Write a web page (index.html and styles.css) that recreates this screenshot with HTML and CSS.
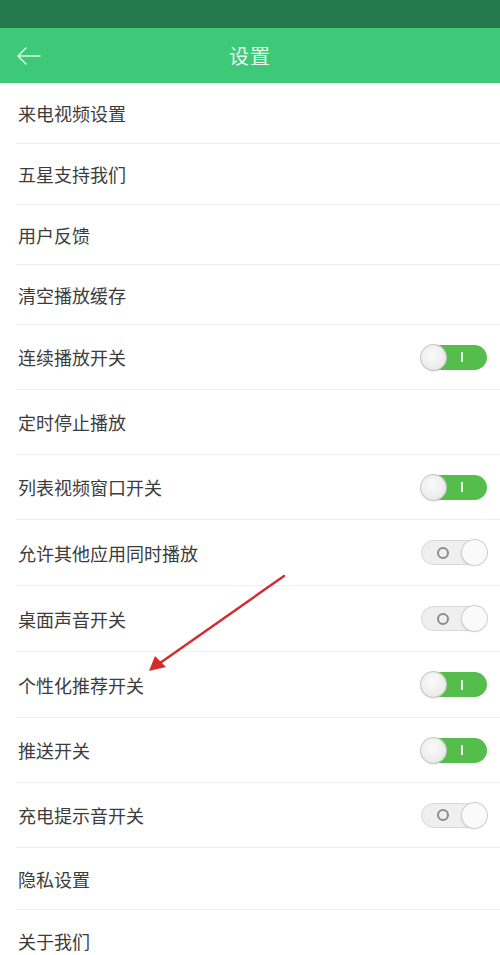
FILE: index.html
```html
<!DOCTYPE html>
<html lang="zh-CN">
<head>
<meta charset="utf-8">
<title>设置</title>
<link rel="stylesheet" href="styles.css">
</head>
<body>
<div class="page">
  <div class="statusbar"></div>
  <header class="topbar">
    <svg class="back" width="26" height="20" viewBox="0 0 26 20"><path d="M24 10H3M10 2L2 10l8 8" fill="none" stroke="#d9f6e4" stroke-width="1.6" stroke-linecap="round" stroke-linejoin="round"/></svg>
    <h1 class="title">设置</h1>
  </header>
  <ul class="list">
    <li class="row short">来电视频设置</li>
    <li class="row short">五星支持我们</li>
    <li class="row short s60">用户反馈</li>
    <li class="row short s60">清空播放缓存</li>
    <li class="row">连续播放开关<span class="toggle on"><span class="knob"></span><span class="mark"></span></span></li>
    <li class="row">定时停止播放</li>
    <li class="row">列表视频窗口开关<span class="toggle on"><span class="knob"></span><span class="mark"></span></span></li>
    <li class="row tall">允许其他应用同时播放<span class="toggle off"><span class="mark"></span><span class="knob"></span></span></li>
    <li class="row tall">桌面声音开关<span class="toggle off"><span class="mark"></span><span class="knob"></span></span></li>
    <li class="row tall">个性化推荐开关<span class="toggle on"><span class="knob"></span><span class="mark"></span></span></li>
    <li class="row">推送开关<span class="toggle on"><span class="knob"></span><span class="mark"></span></span></li>
    <li class="row">充电提示音开关<span class="toggle off"><span class="mark"></span><span class="knob"></span></span></li>
    <li class="row s62">隐私设置</li>
    <li class="row s62 last">关于我们</li>
  </ul>
  <svg class="annot" width="500" height="955" viewBox="0 0 500 955">
    <path d="M284 576 L210 628 L160 663" stroke="#d62b2b" stroke-width="2.4" stroke-linecap="round" fill="none"/>
    <path d="M149 671 L155 656 L166 667 Z" fill="#d62b2b"/>
  </svg>
</div>
</body>
</html>
```
FILE: styles.css
```css
* { box-sizing: border-box; }
html, body { margin: 0; padding: 0; background: #ffffff; }
body {
  font-family: "Noto Sans CJK SC", "Noto Sans", sans-serif;
  color: #3a3a3a;
  width: 500px;
  height: 955px;
  overflow: hidden;
}
.page { position: relative; width: 500px; height: 955px; overflow: hidden; }
.statusbar { height: 28px; background: #247a4c; }
.topbar {
  height: 55px;
  background: #3dc978;
  display: flex;
  align-items: center;
  justify-content: center;
  position: relative;
}
.back { position: absolute; left: 16px; top: 18px; }
.title {
  margin: 0;
  font-size: 20px;
  font-weight: 400;
  color: #e8f8ee;
  letter-spacing: 1px;
}
.list { list-style: none; margin: 0; padding: 0; }
.row {
  height: 65px;
  margin-left: 16px;
  padding-left: 2px;
  padding-right: 13px;
  border-bottom: 1px solid #f0f0f0;
  display: flex;
  align-items: center;
  justify-content: space-between;
  font-size: 18px;
  color: #3c3c3c;
}
.row.short { height: 61px; }
.row.s60 { height: 60px; }
.row.tall { height: 66px; }
.row.s62 { height: 62px; }
.row.last { border-bottom: none; }
.toggle {
  width: 66px;
  height: 25px;
  border-radius: 13px;
  display: flex;
  align-items: center;
  position: relative;
  flex: none;
}
.toggle.on { background: #55bd4b; }
.toggle.off { background: #efefef; border: 1px solid #d8d8d8; }
.knob {
  width: 25px;
  height: 25px;
  border-radius: 50%;
  background: radial-gradient(circle at 45% 40%, #fbfbfb 0%, #ebebeb 70%, #dcdcdc 100%);
  box-shadow: 0 0 0 1px #c9c9c9, 0 1px 2px rgba(0,0,0,0.2);
  flex: none;
}
.toggle.off .knob {
  width: 25px;
  height: 25px;
  margin-top: -1px;
  margin-bottom: -1px;
  margin-right: -1px;
  background: #fafafa;
  box-shadow: 0 0 0 1px #cfcfcf, -1px 1px 2px rgba(0,0,0,0.12);
}
.toggle.on .mark {
  width: 2px;
  height: 10px;
  background: #e9f7e6;
  margin-left: 15px;
}
.toggle.off .mark {
  width: 12px;
  height: 12px;
  border: 2px solid #8c8c8c;
  border-radius: 50%;
  margin-left: 15px;
  margin-right: auto;
}
.annot { position: absolute; left: 0; top: 0; pointer-events: none; }
```
